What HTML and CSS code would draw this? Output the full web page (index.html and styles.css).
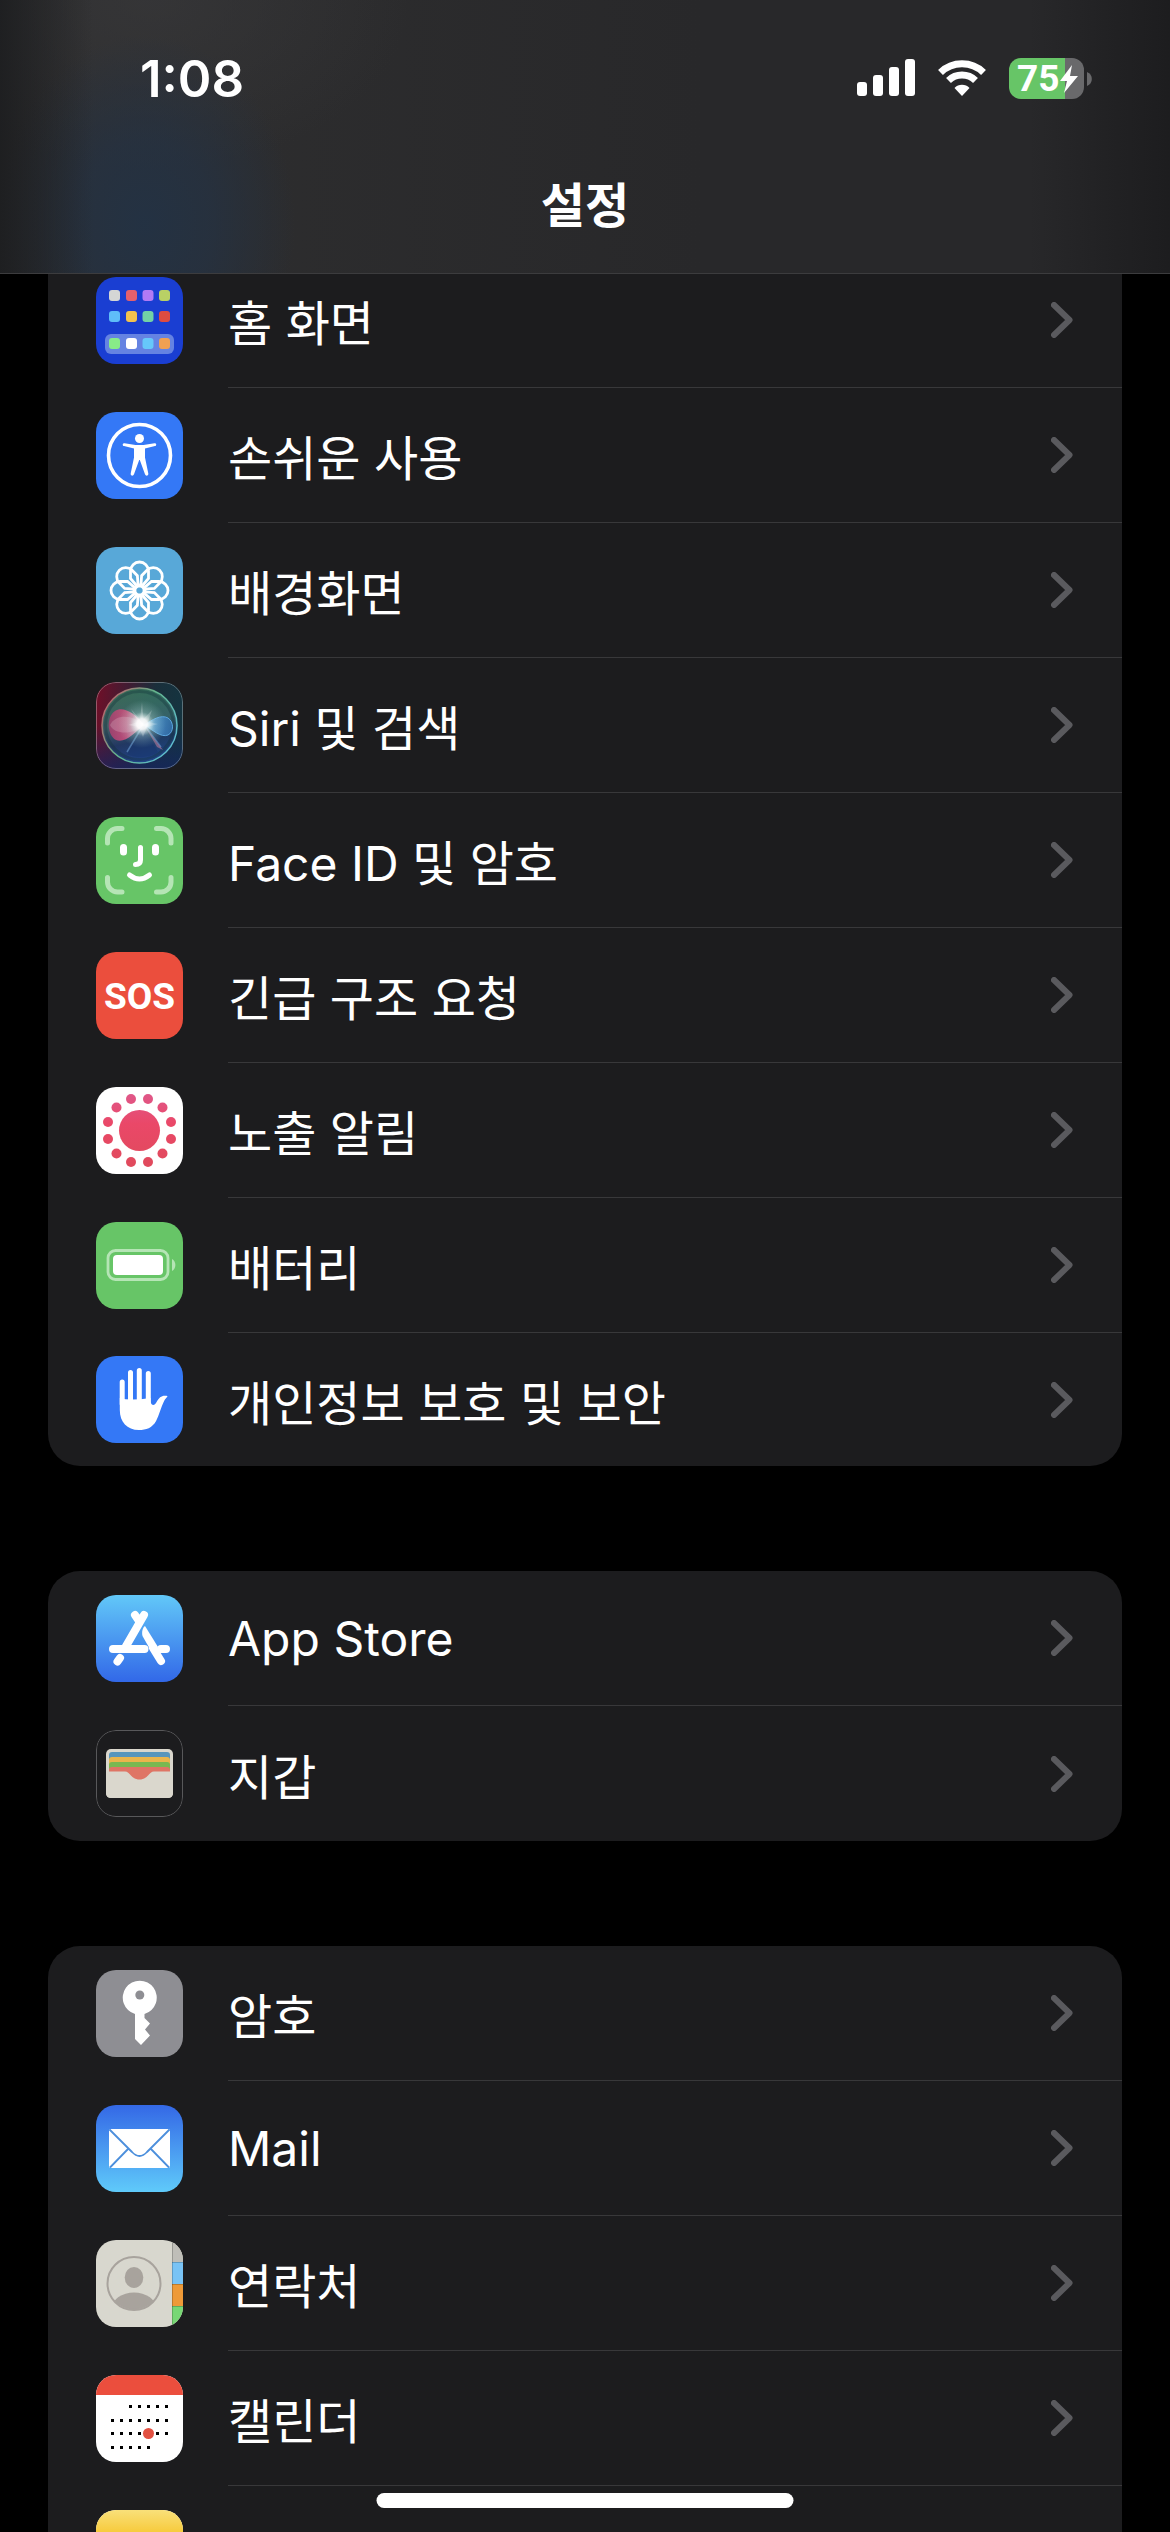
FILE: index.html
```html
<!DOCTYPE html>
<html lang="ko">
<head>
  <meta charset="UTF-8" />
  <meta name="viewport" content="width=device-width, initial-scale=1.0"/>
  <title>설정</title>
  <link rel="stylesheet" href="styles.css">
</head>
<body>

<svg class="defs" aria-hidden="true">
  <symbol id="chevron" viewBox="0 0 22 36">
    <path d="M3 3l15.500 15L3 33" fill="none" stroke="#5a5a5e" stroke-width="6" stroke-linecap="round" stroke-linejoin="round"/>
  </symbol>
</svg>

<div class="screen">
  <header class="navbar">
    <div class="status">
      <span class="time">1:08</span>
      <div class="status-icons">
        <svg width="58" height="38" viewBox="0 0 58 38" fill="#fff">
          <rect x="0" y="23" width="10" height="14" rx="3"/>
          <rect x="16" y="16" width="10" height="21" rx="3"/>
          <rect x="32" y="8" width="10" height="29" rx="3"/>
          <rect x="48" y="0" width="10" height="37" rx="3"/>
        </svg>
        <svg width="50" height="38" viewBox="0 0 50 38">
          <path d="M3.500 13.500a31 31 0 0 1 43 0" fill="none" stroke="#fff" stroke-width="7"/>
          <path d="M11.500 21.500a19.500 19.500 0 0 1 27 0" fill="none" stroke="#fff" stroke-width="7"/>
          <path d="M25 37l-7.500-8a10.500 10.500 0 0 1 15 0z" fill="#fff"/>
        </svg>
        <div class="battery">
          <span class="battery-level">75</span>
          <svg class="bolt" width="20" height="28" viewBox="0 0 20 28"><path d="M13 0L1 16h7L5 28 19 11h-8z" fill="#fff"/></svg>
          <svg class="nub" width="5" height="14" viewBox="0 0 5 14"><path d="M0 0a7.500 7.500 0 0 1 0 14z" fill="#69696b"/></svg>
        </div>
      </div>
    </div>
    <h1>설정</h1>
  </header>

  <main>
    <nav class="group group-first">
      <a class="row" href="#">
        <svg class="icon" viewBox="0 0 87 87">
          <rect width="87" height="87" fill="#1a3ed2"/>
          <rect x="9" y="57" width="69" height="20" rx="6" fill="#6583e2"/>
          <rect x="13" y="13" width="11" height="11" rx="3" fill="#d5d6d5"/>
          <rect x="30" y="13" width="11" height="11" rx="3" fill="#e4606c"/>
          <rect x="46.500" y="13" width="11" height="11" rx="3" fill="#b27af5"/>
          <rect x="63" y="13" width="11" height="11" rx="3" fill="#b9d065"/>
          <rect x="13" y="34" width="11" height="11" rx="3" fill="#5fbdf9"/>
          <rect x="30" y="34" width="11" height="11" rx="3" fill="#f2c24e"/>
          <rect x="46.500" y="34" width="11" height="11" rx="3" fill="#72d2a6"/>
          <rect x="63" y="34" width="11" height="11" rx="3" fill="#de4c41"/>
          <rect x="13" y="61" width="11" height="11" rx="3" fill="#88ec88"/>
          <rect x="30" y="61" width="11" height="11" rx="3" fill="#fff"/>
          <rect x="46.500" y="61" width="11" height="11" rx="3" fill="#66c8fa"/>
          <rect x="63" y="61" width="11" height="11" rx="3" fill="#f0a052"/>
        </svg>
        <span class="label"><span>홈 화면</span><svg class="chevron"><use href="#chevron"/></svg></span>
      </a>
      <a class="row" href="#">
        <svg class="icon" viewBox="0 0 87 87">
          <rect width="87" height="87" fill="#3478f6"/>
          <circle cx="43.500" cy="43.500" r="31" fill="none" stroke="#fff" stroke-width="3.600"/>
          <circle cx="43.500" cy="26.500" r="4.500" fill="#fff"/>
          <path d="M28.500 31.200l11 1.800h8l11-1.800c2-.300 2.400 2.500.500 2.900L49 36.500v9l3.300 16c.400 2.400-2.600 3-3.300.800L43.800 48h-.600L38 62.300c-.800 2.200-3.700 1.600-3.300-.800l3.300-16v-9l-10-2.400c-1.900-.400-1.500-3.200.500-2.900z" fill="#fff"/>
        </svg>
        <span class="label"><span>손쉬운 사용</span><svg class="chevron"><use href="#chevron"/></svg></span>
      </a>
      <a class="row" href="#">
        <svg class="icon" viewBox="0 0 87 87">
          <defs><path id="petal" d="M-9 -19.500a9 9 0 0 1 18 0V-12L2.500 -4.500h-5L-9 -12z"/></defs>
          <rect width="87" height="87" fill="#58a8d8"/>
          <g transform="translate(43.500 43.500)" fill="none" stroke="#fff" stroke-width="2.800">
            <use href="#petal"/>
            <use href="#petal" transform="rotate(45)"/>
            <use href="#petal" transform="rotate(90)"/>
            <use href="#petal" transform="rotate(135)"/>
            <use href="#petal" transform="rotate(180)"/>
            <use href="#petal" transform="rotate(225)"/>
            <use href="#petal" transform="rotate(270)"/>
            <use href="#petal" transform="rotate(315)"/>
            <circle r="5.500"/>
          </g>
        </svg>
        <span class="label"><span>배경화면</span><svg class="chevron"><use href="#chevron"/></svg></span>
      </a>
      <a class="row" href="#">
        <svg class="icon" viewBox="0 0 87 87">
          <defs>
            <linearGradient id="siriBg" x1="0" y1=".4" x2="1" y2=".5">
              <stop offset="0" stop-color="#6c1029"/><stop offset=".35" stop-color="#3e1d33"/><stop offset=".65" stop-color="#1a2f3b"/><stop offset="1" stop-color="#143440"/>
            </linearGradient>
            <linearGradient id="siriLow" x1="0" y1="0" x2="0" y2="1">
              <stop offset=".5" stop-color="#15285c" stop-opacity="0"/><stop offset="1" stop-color="#152460" stop-opacity=".75"/>
            </linearGradient>
            <linearGradient id="siriOrb" x1=".4" y1="0" x2=".6" y2="1">
              <stop offset="0" stop-color="#367a5e"/><stop offset=".45" stop-color="#3b6a6e"/><stop offset=".7" stop-color="#1f3c68"/><stop offset="1" stop-color="#234a94"/>
            </linearGradient>
            <linearGradient id="siriRing" x1="0" y1=".2" x2="1" y2=".8">
              <stop offset="0" stop-color="#c05c68"/><stop offset=".45" stop-color="#63b48c"/><stop offset="1" stop-color="#5cbcd6"/>
            </linearGradient>
            <linearGradient id="siriLeft" x1="0" y1="0" x2="1" y2="0">
              <stop offset="0" stop-color="#b03e70"/><stop offset=".5" stop-color="#de5080"/><stop offset="1" stop-color="#f4c8dc"/>
            </linearGradient>
            <linearGradient id="siriRight" x1="1" y1="0" x2="0" y2="0">
              <stop offset="0" stop-color="#3170ae"/><stop offset=".6" stop-color="#4e96d6"/><stop offset="1" stop-color="#d4efff"/>
            </linearGradient>
            <radialGradient id="siriGlow">
              <stop offset="0" stop-color="#fff"/><stop offset=".22" stop-color="#fff" stop-opacity=".9"/><stop offset=".5" stop-color="#c8f0e8" stop-opacity=".3"/><stop offset="1" stop-color="#a0d8d0" stop-opacity="0"/>
            </radialGradient>
          </defs>
          <rect width="87" height="87" fill="url(#siriBg)"/>
          <rect width="87" height="87" fill="url(#siriLow)"/>
          <circle cx="43.500" cy="43.500" r="37.500" fill="url(#siriOrb)" fill-opacity=".85" stroke="url(#siriRing)" stroke-width="1.500"/>
          <circle cx="43.500" cy="43.500" r="34" fill="none" stroke="#123038" stroke-opacity=".35" stroke-width="3"/>
          <path d="M48 43C39 31 27 24 19 29c-9 6-8 24 1 29 9 4 19-8 28-15z" fill="url(#siriLeft)" fill-opacity=".8"/>
          <path d="M48 43C38 33 20 31 14 43c4 10 24 10 34 0z" fill="#fff" fill-opacity=".18"/>
          <path d="M48 43c8-5 17-11 24-7 6 4 6 14 0 17-7 3-15-5-24-10z" fill="url(#siriRight)" fill-opacity=".8" stroke="#5ba6e0" stroke-width="1"/>
          <path d="M47 46L31 72c10 5 22 4 31-2z" fill="#17346e" fill-opacity=".55"/>
          <path d="M46 45L31 70M49 44l16 21" stroke="#6fa4da" stroke-opacity=".55" stroke-width="1.500"/>
          <path d="M50 46l17 22-6-3z" fill="#b87a9a" fill-opacity=".6"/>
          <circle cx="46" cy="42" r="24" fill="url(#siriGlow)"/>
          <path d="M46 20l1.500 17L56 28l-4 12 10 2-11 3-4 10-4-10-11-2 10-3-7-13 9 10z" fill="#fff" fill-opacity=".22"/>
          <rect x=".5" y=".5" width="86" height="86" rx="19.500" fill="none" stroke="#fff" stroke-opacity=".3"/>
        </svg>
        <span class="label"><span>Siri 및 검색</span><svg class="chevron"><use href="#chevron"/></svg></span>
      </a>
      <a class="row" href="#">
        <svg class="icon" viewBox="0 0 87 87">
          <rect width="87" height="87" fill="#67c567"/>
          <g fill="none" stroke-linecap="round" stroke-width="5">
            <path d="M11.500 26v-4.500a10 10 0 0 1 10-10H26M60.500 11.500H65a10 10 0 0 1 10 10V26M75 60.500V65a10 10 0 0 1-10 10h-4.500M26 75h-4.500a10 10 0 0 1-10-10v-4.500" stroke="#b5e5b5"/>
            <path d="M27.500 30.500v4.500M59.500 30.500v4.500" stroke="#fff" stroke-width="7"/>
            <path d="M44.500 30.500v12.500q0 4.500-5 4.500M33.500 58q10 8 20 0" stroke="#fff"/>
          </g>
        </svg>
        <span class="label"><span>Face ID 및 암호</span><svg class="chevron"><use href="#chevron"/></svg></span>
      </a>
      <a class="row" href="#">
        <svg class="icon" viewBox="0 0 87 87">
          <rect width="87" height="87" fill="#eb4e3d"/>
          <text class="sos" x="43.500" y="57" text-anchor="middle">SOS</text>
        </svg>
        <span class="label"><span>긴급 구조 요청</span><svg class="chevron"><use href="#chevron"/></svg></span>
      </a>
      <a class="row" href="#">
        <svg class="icon" viewBox="0 0 87 87">
          <defs>
            <linearGradient id="expo" gradientUnits="userSpaceOnUse" x1="0" y1="8" x2="0" y2="80">
              <stop offset="0" stop-color="#e05788"/><stop offset=".4" stop-color="#ea4868"/><stop offset="1" stop-color="#e04a5c"/>
            </linearGradient>
          </defs>
          <rect width="87" height="87" fill="#fff"/>
          <g fill="url(#expo)">
            <circle cx="43.500" cy="43.500" r="20.500"/>
            <circle cx="35" cy="12" r="5"/><circle cx="52" cy="12" r="5"/>
            <circle cx="20.500" cy="20.500" r="5"/><circle cx="66.500" cy="20.500" r="5"/>
            <circle cx="12" cy="35" r="5"/><circle cx="75" cy="35" r="5"/>
            <circle cx="12" cy="52" r="5"/><circle cx="75" cy="52" r="5"/>
            <circle cx="20.500" cy="66.500" r="5"/><circle cx="66.500" cy="66.500" r="5"/>
            <circle cx="35" cy="75" r="5"/><circle cx="52" cy="75" r="5"/>
          </g>
        </svg>
        <span class="label"><span>노출 알림</span><svg class="chevron"><use href="#chevron"/></svg></span>
      </a>
      <a class="row" href="#">
        <svg class="icon" viewBox="0 0 87 87">
          <rect width="87" height="87" fill="#67c567"/>
          <rect x="12" y="28.500" width="60" height="29" rx="7.500" fill="none" stroke="#b5e5b5" stroke-width="2.800"/>
          <rect x="17" y="33" width="50" height="20" rx="4" fill="#fff"/>
          <path d="M76 37a7 7 0 0 1 0 12z" fill="#b5e5b5"/>
        </svg>
        <span class="label"><span>배터리</span><svg class="chevron"><use href="#chevron"/></svg></span>
      </a>
      <a class="row" href="#">
        <svg class="icon" viewBox="0 0 87 87">
          <rect width="87" height="87" fill="#3478f6"/>
          <path d="M26.200 26v22M34.500 16.500V45M43.300 14.500V45M52.300 17.500V47" stroke="#fff" stroke-width="5" stroke-linecap="round"/>
          <path d="M23.800 42q10 3 30.800 0v4c1 4 4 4 6 0 3-5 5-7 11-6-1 2-2 2-3.500 5-3 6-5 14-8 20-4 7-10 9-17.100 9-12 0-19.200-8-19.200-20z" fill="#fff"/>
        </svg>
        <span class="label"><span>개인정보 보호 및 보안</span><svg class="chevron"><use href="#chevron"/></svg></span>
      </a>
    </nav>

    <nav class="group">
      <a class="row" href="#">
        <svg class="icon" viewBox="0 0 87 87">
          <defs>
            <linearGradient id="store" x1="0" y1="0" x2="0" y2="1"><stop offset="0" stop-color="#62c8f8"/><stop offset="1" stop-color="#3268e8"/></linearGradient>
          </defs>
          <rect width="87" height="87" fill="url(#store)"/>
          <g fill="none" stroke="#fff" stroke-width="8" stroke-linecap="round">
            <path d="M39 20l4 6M48 20L29.500 52M17 54h31.500M65 54h5M24 63l-2.500 3.500M57 53l8 13"/>
          </g>
          <path d="M46.500 41c-1-4 0-8 2.500-10l13 21-7 4z" fill="#fff"/>
        </svg>
        <span class="label"><span>App Store</span><svg class="chevron"><use href="#chevron"/></svg></span>
      </a>
      <a class="row" href="#">
        <svg class="icon" viewBox="0 0 87 87">
          <rect x=".5" y=".5" width="86" height="86" rx="19.500" fill="#1c1c1e" stroke="#58585a"/>
          <rect x="10" y="19" width="67" height="49" rx="5" fill="#dad7cd"/>
          <path d="M13 42V25q0-3 3-3h55q3 0 3 3v17z" fill="#5896bc"/>
          <path d="M13 42V30q0-3 3-3h55q3 0 3 3v12z" fill="#eab54c"/>
          <path d="M13 42v-7q0-3 3-3h55q3 0 3 3v7z" fill="#79b851"/>
          <path d="M13 51V40q0-3 3-3h55q3 0 3 3v11z" fill="#df7565"/>
          <path d="M10 41.500h19c5 0 6 8 14.500 8s9.500-8 14.500-8h19V63q0 5-5 5H15q-5 0-5-5z" fill="#dad7cd"/>
        </svg>
        <span class="label"><span>지갑</span><svg class="chevron"><use href="#chevron"/></svg></span>
      </a>
    </nav>

    <nav class="group">
      <a class="row" href="#">
        <svg class="icon" viewBox="0 0 87 87">
          <rect width="87" height="87" fill="#8e8e93"/>
          <path d="M39 44a17 17 0 1 1 9.500 0V48l5.500 5.500-5 6 5 6L45 75l-6-6z" fill="#fff"/>
          <circle cx="43.800" cy="25" r="4.500" fill="#8e8e93"/>
        </svg>
        <span class="label"><span>암호</span><svg class="chevron"><use href="#chevron"/></svg></span>
      </a>
      <a class="row" href="#">
        <svg class="icon" viewBox="0 0 87 87">
          <defs>
            <linearGradient id="mail" x1="0" y1="0" x2="0" y2="1"><stop offset="0" stop-color="#3468e6"/><stop offset="1" stop-color="#5fcafa"/></linearGradient>
          </defs>
          <rect width="87" height="87" fill="url(#mail)"/>
          <rect x="13" y="24" width="61" height="39" rx="2" fill="#fff"/>
          <path d="M13.500 24.500L36 47q7.500 8 15 0l22.500-22.500M14 62.500L32.500 43.500M73 62.500L54.500 43.500" fill="none" stroke="#4c8fdc" stroke-width="1.800"/>
        </svg>
        <span class="label"><span>Mail</span><svg class="chevron"><use href="#chevron"/></svg></span>
      </a>
      <a class="row" href="#">
        <svg class="icon" viewBox="0 0 87 87">
          <defs><clipPath id="face"><circle cx="38" cy="43.500" r="26"/></clipPath></defs>
          <rect width="87" height="87" fill="#d8d7ce"/>
          <rect x="76" width="11" height="22" fill="#bfbeb8"/>
          <rect x="76" y="22" width="11" height="22" fill="#79c3f5"/>
          <rect x="76" y="44" width="11" height="22" fill="#ee9a38"/>
          <rect x="76" y="66" width="11" height="21" fill="#78d775"/>
          <path d="M76.500 0v87M76 22.500h11M76 44.500h11M76 66.500h11" stroke="#000" stroke-opacity=".2"/>
          <ellipse cx="38" cy="37.500" rx="9.300" ry="10.500" fill="#a8a39d"/>
          <ellipse cx="38" cy="68" rx="22" ry="15.500" fill="#a8a39d" clip-path="url(#face)"/>
          <circle cx="38" cy="43.500" r="26.500" fill="none" stroke="#a8a39d" stroke-width="2"/>
        </svg>
        <span class="label"><span>연락처</span><svg class="chevron"><use href="#chevron"/></svg></span>
      </a>
      <a class="row" href="#">
        <svg class="icon" viewBox="0 0 87 87">
          <rect width="87" height="87" fill="#fff"/>
          <rect width="87" height="20" fill="#eb4e3d"/>
          <path d="M33 31.500h40M15 45.500h58M15 58.500h58M15 72.500h39" stroke="#000" stroke-width="3" stroke-dasharray="3 6"/>
          <circle cx="52.500" cy="58.500" r="5.500" fill="#e25142"/>
        </svg>
        <span class="label"><span>캘린더</span><svg class="chevron"><use href="#chevron"/></svg></span>
      </a>
      <a class="row" href="#" aria-label="메모">
        <svg class="icon" viewBox="0 0 87 87">
          <defs>
            <linearGradient id="memo" x1="0" y1="0" x2="0" y2="1"><stop offset="0" stop-color="#f9e07a"/><stop offset=".8" stop-color="#f7cc40"/></linearGradient>
          </defs>
          <rect width="87" height="87" fill="#fff"/>
          <rect width="87" height="26" fill="url(#memo)"/>
        </svg>
      </a>
    </nav>
  </main>

  <div class="home-indicator"></div>
</div>

</body>
</html>
```

FILE: styles.css
```css
* {
  box-sizing: border-box;
}
body {
  margin: 0;
  background: #000;
  color: #fff;
  font-family: Inter, "Noto Sans CJK KR", sans-serif;
}
.defs {
  display: none;
}
.screen {
  position: relative;
  height: 100vh;
  overflow: hidden;
}

.navbar {
  position: absolute;
  top: 0;
  left: 0;
  right: 0;
  z-index: 2;
  height: 274px;
  border-bottom: 1px solid #3c3c3e;
  background:
    linear-gradient(90deg, rgba(26,27,29,.8), rgba(26,27,29,0) 8%, rgba(26,27,29,0) 88%, rgba(26,26,28,.8)),
    radial-gradient(ellipse 150px 190px at 145px 225px, rgba(35,50,68,.95), rgba(36,50,68,.7) 45%, rgba(36,50,68,0)),
    radial-gradient(ellipse 260px 170px at 150px 0, rgba(56,56,58,.7), rgba(56,56,58,0)),
    linear-gradient(90deg, #2f2f30, #28282a 60%);
}
.status {
  display: flex;
  justify-content: space-between;
  align-items: center;
  height: 156px;
  padding: 0 79px 0 140px;
}
.time {
  font-size: 51px;
  font-weight: 600;
}
.status-icons {
  display: flex;
  align-items: center;
  gap: 22px;
}
.battery {
  position: relative;
  display: flex;
  align-items: center;
  width: 75px;
  height: 41px;
  margin-right: 7px;
  padding-left: 8px;
  border-radius: 12px;
  background: linear-gradient(90deg, #67c567 75%, #69696b 75%);
}
.battery-level {
  font-family: Roboto, sans-serif;
  font-size: 37px;
  font-weight: 700;
}
.bolt {
  position: absolute;
  right: 5px;
  top: 7px;
}
.nub {
  position: absolute;
  right: -8px;
  top: 14px;
}
h1 {
  margin: 24px 0 0;
  font-size: 48px;
  line-height: 52px;
  font-weight: 600;
  text-align: center;
}

main {
  padding: 253px 48px 0;
}
.group {
  margin-bottom: 105px;
  border-radius: 32px;
  background: #1c1c1e;
  overflow: hidden;
}
.group-first {
  border-radius: 0 0 32px 32px;
}
.row {
  display: flex;
  align-items: center;
  height: 135px;
  padding-left: 48px;
  color: #fff;
  text-decoration: none;
}
.group-first .row:last-child {
  height: 133px;
}
.icon {
  flex: none;
  width: 87px;
  height: 87px;
  margin-right: 45px;
  border-radius: 20px;
}
.label {
  flex: 1;
  display: flex;
  align-items: center;
  justify-content: space-between;
  height: 100%;
  padding-right: 49px;
  border-bottom: 1px solid #38383a;
  font-size: 48px;
}
.row:last-child .label {
  border-bottom: 0;
}
.chevron {
  width: 22px;
  height: 36px;
}
.sos {
  fill: #fff;
  font-family: Roboto, sans-serif;
  font-size: 37px;
  font-weight: 700;
}

.home-indicator {
  position: absolute;
  z-index: 3;
  left: 50%;
  bottom: 24px;
  width: 417px;
  height: 15px;
  border-radius: 8px;
  background: #fff;
  transform: translateX(-50%);
}
```
